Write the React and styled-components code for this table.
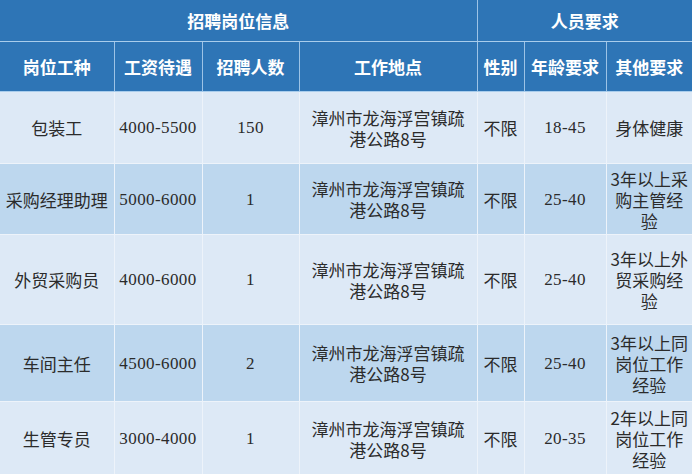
import React from 'react';
import styled, { createGlobalStyle } from 'styled-components';

const GlobalStyle = createGlobalStyle`
    html, body {
        margin: 0;
        padding: 0;
        background: #ffffff;
    }
`;

const Table = styled.table`
    width: 692px;
    table-layout: fixed;
    border-collapse: collapse;
    font-family: "Noto Sans CJK SC", "Noto Sans", sans-serif;
    font-size: 17px;
    line-height: 21px;
`;

const HeadCell = styled.th`
    background-color: #2e75b6;
    color: #ffffff;
    font-weight: bold;
    text-align: center;
    padding: 0;
    height: ${props => props.h}px;
    border-right: 1px solid #9dc3e6;
    border-bottom: 1px solid #a9cdec;
    &:last-child {
        border-right: none;
    }
`;

const Row = styled.tr`
    background-color: ${props => props.dark ? '#bdd7ee' : '#dde9f6'};
    height: ${props => props.h}px;
`;

const Cell = styled.td`
    text-align: center;
    vertical-align: middle;
    color: #2b2b2b;
    padding: 0 ${props => props.pad || 2}px;
    font-family: ${props => props.serif
        ? '"Liberation Serif", "Noto Sans CJK SC", serif'
        : '"Noto Sans CJK SC", "Noto Sans", sans-serif'};
    letter-spacing: ${props => props.serif ? '0.4px' : '0'};
    border-right: 1px solid #edf3fa;
    border-bottom: 1px solid #edf3fa;
    &:last-child {
        border-right: none;
    }
`;

const widths = [114, 88, 97, 178, 47, 82, 86];

const jobs = [
    { name: '包装工', pay: '4000-5500', count: '150', age: '18-45', other: '身体健康', h: 72 },
    { name: '采购经理助理', pay: '5000-6000', count: '1', age: '25-40', other: '3年以上采购主管经验', h: 71 },
    { name: '外贸采购员', pay: '4000-6000', count: '1', age: '25-40', other: '3年以上外贸采购经验', h: 90 },
    { name: '车间主任', pay: '4500-6000', count: '2', age: '25-40', other: '3年以上同岗位工作经验', h: 77 },
    { name: '生管专员', pay: '3000-4000', count: '1', age: '20-35', other: '2年以上同岗位工作经验', h: 74 },
];

export default function App() {
    return (
        <>
            <GlobalStyle />
            <Table>
                <colgroup>
                    {widths.map((w, i) => <col key={i} style={{ width: w }} />)}
                </colgroup>
                <thead>
                    <tr>
                        <HeadCell h={41} colSpan={4}>招聘岗位信息</HeadCell>
                        <HeadCell h={41} colSpan={3}>人员要求</HeadCell>
                    </tr>
                    <tr>
                        <HeadCell h={49}>岗位工种</HeadCell>
                        <HeadCell h={49}>工资待遇</HeadCell>
                        <HeadCell h={49}>招聘人数</HeadCell>
                        <HeadCell h={49}>工作地点</HeadCell>
                        <HeadCell h={49}>性别</HeadCell>
                        <HeadCell h={49}>年龄要求</HeadCell>
                        <HeadCell h={49}>其他要求</HeadCell>
                    </tr>
                </thead>
                <tbody>
                    {jobs.map((job, i) => (
                        <Row key={job.name} dark={i % 2 === 1} h={job.h}>
                            <Cell>{job.name}</Cell>
                            <Cell serif>{job.pay}</Cell>
                            <Cell serif>{job.count}</Cell>
                            <Cell pad={8}>漳州市龙海浮宫镇疏港公路8号</Cell>
                            <Cell>不限</Cell>
                            <Cell serif>{job.age}</Cell>
                            <Cell pad={3}>{job.other}</Cell>
                        </Row>
                    ))}
                </tbody>
            </Table>
        </>
    );
}
